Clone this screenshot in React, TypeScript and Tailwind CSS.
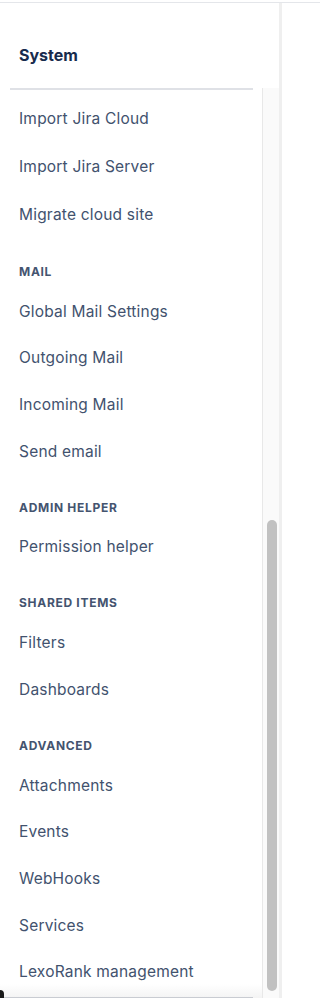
const sections: { heading?: string; items: string[] }[] = [
  { items: ["Import Jira Cloud", "Import Jira Server", "Migrate cloud site"] },
  { heading: "Mail", items: ["Global Mail Settings", "Outgoing Mail", "Incoming Mail", "Send email"] },
  { heading: "Admin helper", items: ["Permission helper"] },
  { heading: "Shared items", items: ["Filters", "Dashboards"] },
  { heading: "Advanced", items: ["Attachments", "Events", "WebHooks", "Services", "LexoRank management"] },
];

export default function App() {
  return (
    <div className="relative h-[998px] overflow-hidden bg-white font-['Inter','Liberation_Sans',sans-serif]">
      <div className="mt-[2px] h-[1px] bg-[#e4e6ea]" />
      <div className="flex h-[995px] w-[282px] flex-col border-r-[3px] border-[#efefef]">
        {/* Header */}
        <div className="h-[85px] shrink-0 pl-[19px] pt-[42px]">
          <h2 className="text-[16px] font-bold leading-[20px] text-[#172b4d]">System</h2>
        </div>

        <div className="flex min-h-0 flex-1">
          <div className="flex min-w-0 flex-1 flex-col">
            <div className="ml-[10px] h-[2px] w-[243px] shrink-0 bg-[#dfe1e6]" />
            <nav className="relative flex-1 overflow-hidden pt-[5px]">
              {sections.map((s, i) => (
                <div key={i}>
                  {s.heading && (
                    <div className="pl-[19px] pt-[25px] pb-[8px] text-[12px] font-bold uppercase leading-[16px] tracking-[0.7px] text-[#44546f]">
                      {s.heading}
                    </div>
                  )}
                  {s.items.map((item) => (
                    <a
                      key={item}
                      href="#"
                      className={`flex items-center pl-[19px] text-[15.5px] tracking-[0.2px] text-[#42526e] ${
                        i === 0 ? "h-[48px]" : "h-[46.7px]"
                      }`}
                    >
                      {item}
                    </a>
                  ))}
                </div>
              ))}
              <div className="absolute bottom-0 left-0 h-[14px] w-full bg-gradient-to-b from-white/0 to-[#ececec]/60" />
              <div className="absolute bottom-0 left-0 h-[1px] w-[253px] bg-[#c9ccd2]" />
            </nav>
          </div>

          {/* Scrollbar */}
          <div className="relative w-[17px] shrink-0 border-l border-[#e8e8e8] bg-[#fafafa]">
            <div className="absolute left-[4px] top-[432px] h-[471px] w-[10px] rounded-full bg-[#c1c1c1]" />
          </div>
        </div>
      </div>
      <div className="absolute bottom-0 left-0 h-[8px] w-[4px] rounded-tr-[8px] bg-[#1a1a1a]" />
    </div>
  );
}
